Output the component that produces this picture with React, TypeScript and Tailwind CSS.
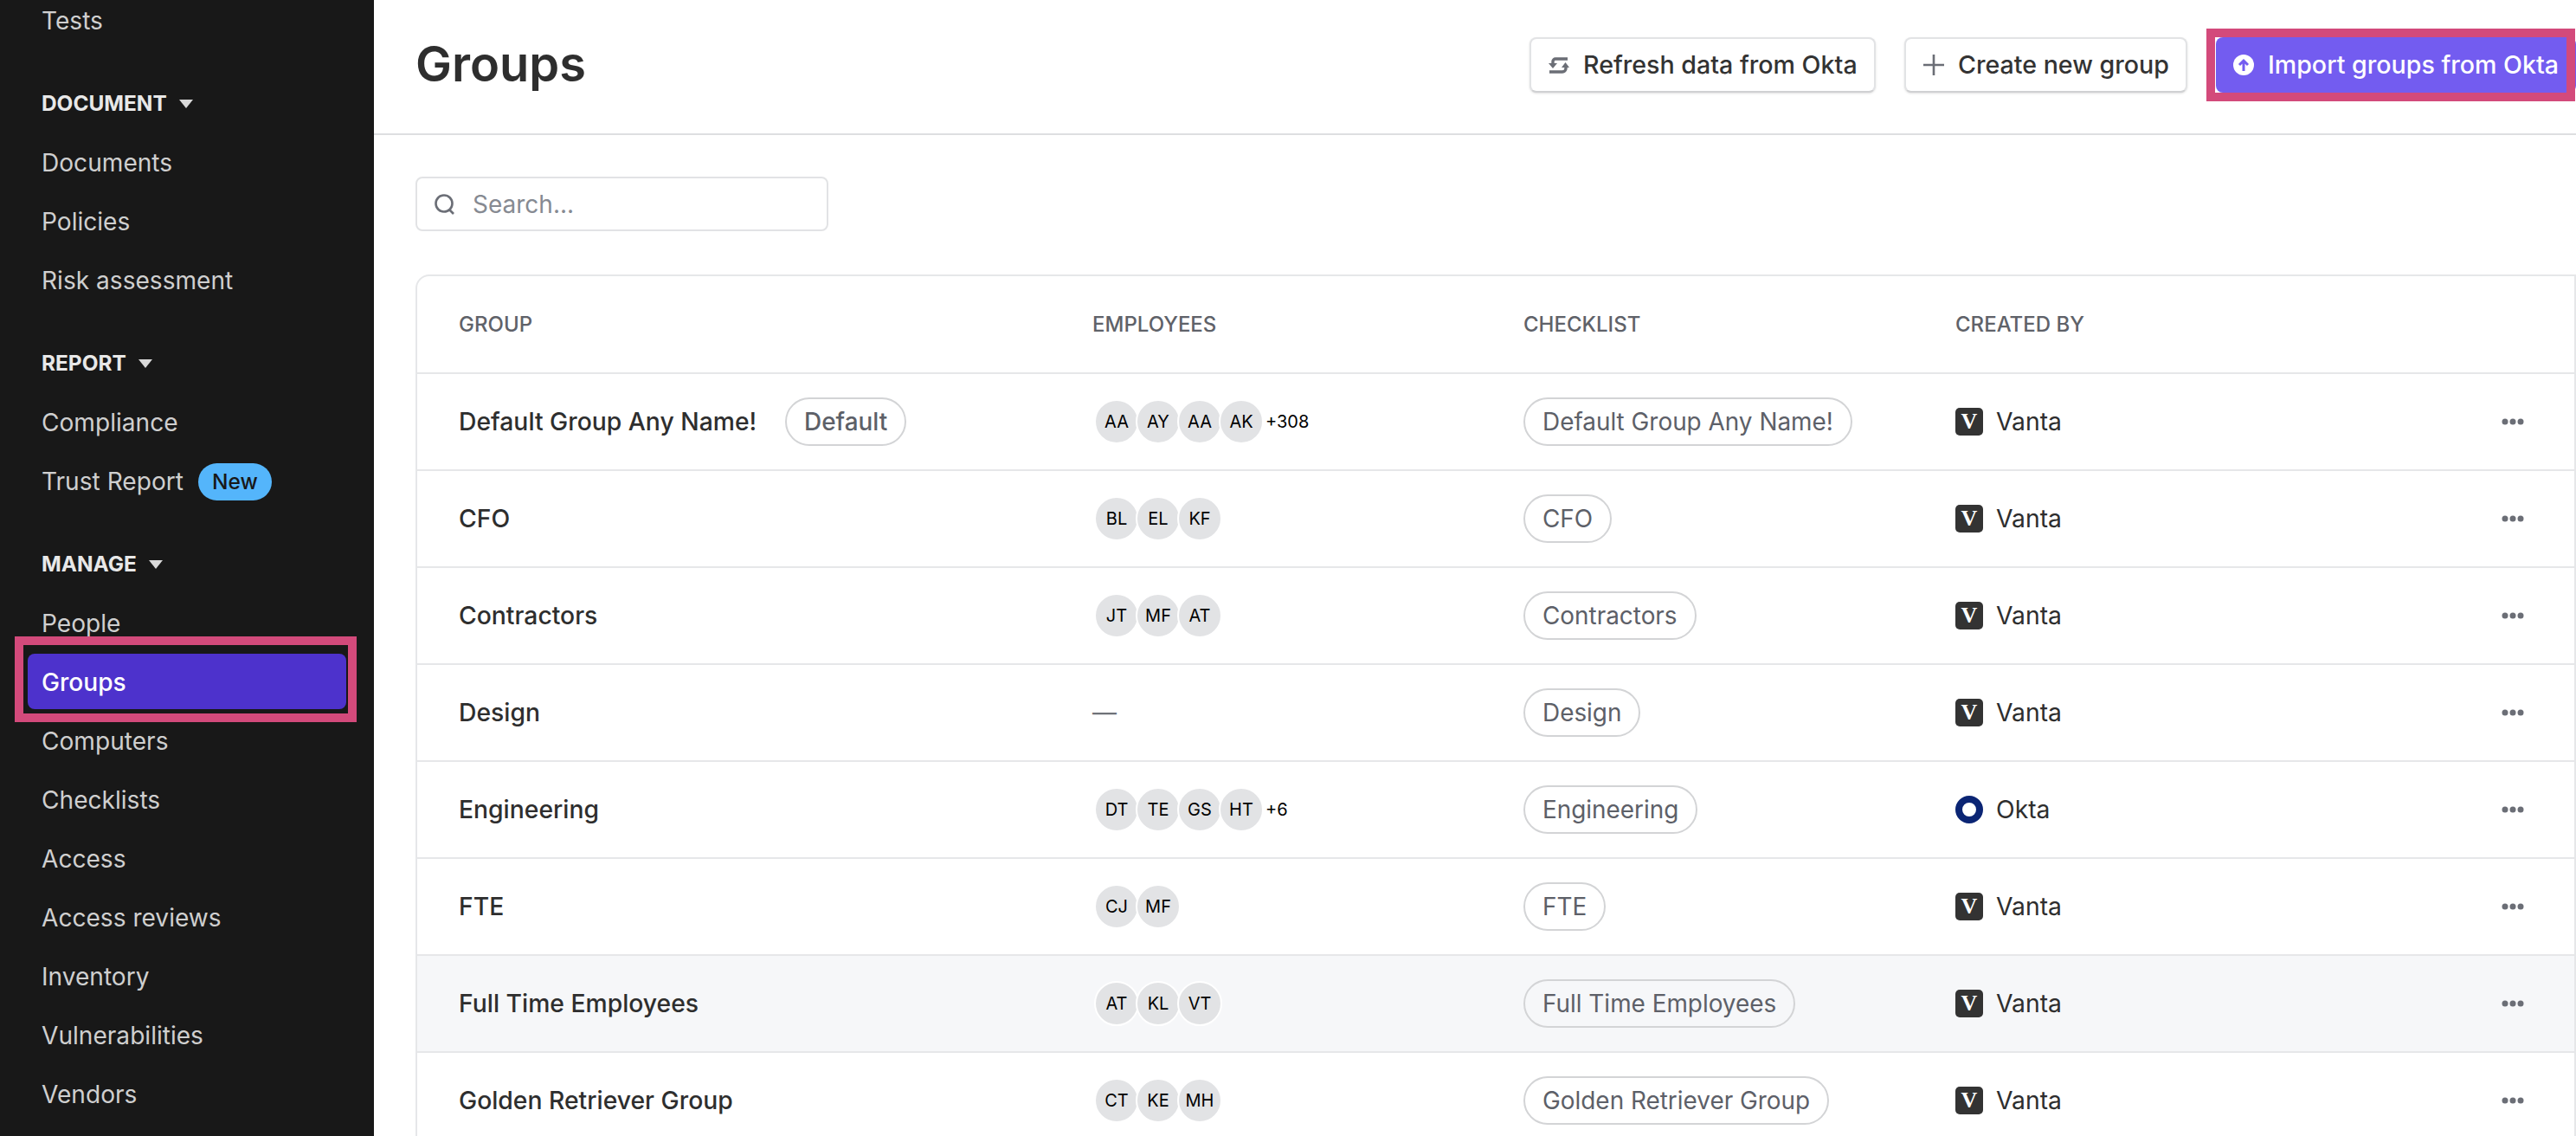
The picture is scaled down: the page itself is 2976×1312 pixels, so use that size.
const font = "font-['Inter',sans-serif]";

const navGroups = [
  { items: ['Tests'] },
  { label: 'DOCUMENT', items: ['Documents', 'Policies', 'Risk assessment'] },
  { label: 'REPORT', items: ['Compliance', 'Trust Report'] },
  {
    label: 'MANAGE',
    items: ['People', 'Groups', 'Computers', 'Checklists', 'Access', 'Access reviews', 'Inventory', 'Vulnerabilities', 'Vendors'],
  },
];

const rows = [
  { name: 'Default Group Any Name!', isDefault: true, people: ['AA', 'AY', 'AA', 'AK'], more: '+308', by: 'Vanta' },
  { name: 'CFO', people: ['BL', 'EL', 'KF'], by: 'Vanta' },
  { name: 'Contractors', people: ['JT', 'MF', 'AT'], by: 'Vanta' },
  { name: 'Design', people: [], by: 'Vanta' },
  { name: 'Engineering', people: ['DT', 'TE', 'GS', 'HT'], more: '+6', by: 'Okta' },
  { name: 'FTE', people: ['CJ', 'MF'], by: 'Vanta' },
  { name: 'Full Time Employees', people: ['AT', 'KL', 'VT'], by: 'Vanta', hover: true },
  { name: 'Golden Retriever Group', people: ['CT', 'KE', 'MH'], by: 'Vanta' },
];

function Caret() {
  return (
    <svg width="16" height="11" viewBox="0 0 16 11" className="ml-[14px]">
      <path d="M0 1h16L8 11z" fill="#d9d9d9" />
    </svg>
  );
}

function Sidebar() {
  return (
    <aside className="w-[432px] shrink-0 bg-[#181818]">
      <div className="-mt-[9px]">
        {navGroups.map((group, i) => (
          <div key={i}>
            {group.label && (
              <div className="flex h-[96px] items-center pl-12 pt-[25px] text-[24.4px] font-bold text-[#e8e8e8]">
                {group.label}
                <Caret />
              </div>
            )}
            {group.items.map((item) => (
              <div
                key={item}
                className={`relative mx-8 mb-1 flex h-16 items-center rounded-lg px-4 pt-[2px] text-[28.1px] ${
                  item === 'Groups' ? 'bg-[#4d32cc] font-medium text-white' : 'text-[#cfcfcf]'
                }`}
              >
                {item}
                {item === 'Trust Report' && (
                  <span className="ml-[17px] flex h-[43px] items-center rounded-full bg-[#54b5fb] px-4 text-[24.5px] font-medium text-[#181818]">
                    New
                  </span>
                )}
                {item === 'Groups' && (
                  <span className="absolute -top-5 -right-3 -bottom-[15px] -left-[15px] border-10 border-[#d34a7b]" />
                )}
              </div>
            ))}
          </div>
        ))}
      </div>
    </aside>
  );
}

function Avatars({ people, more }: { people: string[]; more?: string }) {
  if (people.length === 0) return <span className="text-[28px] text-[#6f7278]">—</span>;
  return (
    <div className="flex items-center pl-[2px]">
      {people.map((p, i) => (
        <span
          key={i}
          className="-mr-1 flex h-[52px] w-[52px] items-center justify-center rounded-full border-2 border-white bg-[#e2e3e5] text-[20px] text-black"
        >
          {p}
        </span>
      ))}
      {more && <span className="ml-[6px] text-[20px] text-black">{more}</span>}
    </div>
  );
}

function Chip({ children }: { children: string }) {
  return (
    <span className="inline-flex h-14 items-center rounded-full border-2 border-[#d3d4d6] px-[20px] pt-[1px] text-[27.9px] text-[#5d6068]">
      {children}
    </span>
  );
}

function Source({ by }: { by: string }) {
  return (
    <div className="flex items-center gap-[15px] text-[28.3px] text-[#2e2e2e]">
      {by === 'Okta' ? (
        <span className="h-8 w-8 rounded-full border-[8px] border-[#0b2574]" />
      ) : (
        <span className="flex h-8 w-8 items-center justify-center rounded-[5px] bg-[#333333] font-['Liberation_Serif',serif] text-[26px] leading-none font-bold text-white">
          V
        </span>
      )}
      {by}
    </div>
  );
}

function Dots() {
  return (
    <svg width="26" height="8" viewBox="0 0 26 8" fill="#6b6e76" className="-ml-1">
      <circle cx="4" cy="4" r="3.5" />
      <circle cx="13" cy="4" r="3.5" />
      <circle cx="22" cy="4" r="3.5" />
    </svg>
  );
}

const btn =
  'flex h-[64px] items-center gap-4 rounded-lg border-2 border-[#e2e3e5] border-b-[#d0d1d3] bg-white pl-5 text-[28.6px] font-medium text-[#333333] shadow-sm';

export default function App() {
  return (
    <div className={`flex h-[1312px] w-[2976px] overflow-hidden bg-white ${font}`}>
      <Sidebar />
      <main className="min-w-0 flex-1">
        <header className="flex h-[156px] items-center justify-between border-b-2 border-[#dedfe1] pl-12">
          <h1 className="-mt-[6px] text-[56px] font-semibold text-[#2e2e2e]">Groups</h1>
          <div className="mt-[-4px] flex items-center">
            <button className={`${btn} w-[400px]`}>
              <svg width="24" height="21" viewBox="0 0 24 21" fill="#6b6e76">
                <path d="M22 3H8a3 3 0 0 0-3 3v3" fill="none" stroke="#6b6e76" strokeWidth="3.4" />
                <path d="M0 8h10l-5 6z" />
                <path d="M1 18h15a4 4 0 0 0 4-4v-2" fill="none" stroke="#6b6e76" strokeWidth="3.4" />
                <path d="M15 13h9l-4.500-6z" />
              </svg>
              Refresh data from Okta
            </button>
            <button className={`${btn} ml-[33px] w-[327px]`}>
              <svg width="24" height="24" viewBox="0 0 24 24" fill="none" stroke="#6b6e76" strokeWidth="2.6">
                <path d="M12 0v24M0 12h24" />
              </svg>
              Create new group
            </button>
            <button className="relative ml-[33px] flex h-[64px] w-[416px] items-center gap-4 rounded-lg bg-[#735cf0] pl-5 text-[28.6px] font-medium text-white">
              <svg width="24" height="24" viewBox="0 0 24 24">
                <circle cx="12" cy="12" r="12" fill="white" />
                <path d="M12 19V7M7 12l5-5 5 5" fill="none" stroke="#735cf0" strokeWidth="3" />
              </svg>
              Import groups from Okta
              <span className="absolute -top-[10px] right-[1px] -bottom-[10px] -left-[11px] border-10 border-[#d34a7b]" />
            </button>
          </div>
        </header>
        <div className="pt-[48px] pl-12">
          <div className="flex h-[63px] w-[477px] items-center gap-[20px] rounded-lg border-2 border-[#e2e3e5] pl-5 text-[28px] text-[#868a92]">
            <svg width="24" height="24" viewBox="0 0 24 24" fill="none" stroke="#6b6e76" strokeWidth="2.6">
              <circle cx="11" cy="11" r="9.5" />
              <path d="M17 18l5 5" />
            </svg>
            Search...
          </div>
          <div className="mt-[50px] rounded-tl-2xl border-2 border-[#e6e7e9]">
            <div className="grid h-[111px] grid-cols-[732px_498px_499px_1fr] items-center pl-12 text-[24px] font-medium text-[#5f6269]">
              <span>GROUP</span>
              <span>EMPLOYEES</span>
              <span>CHECKLIST</span>
              <span>CREATED BY</span>
            </div>
            {rows.map((row) => (
              <div
                key={row.name}
                className={`grid h-[112px] grid-cols-[732px_498px_499px_1fr] items-center border-t-2 border-[#e6e7e9] pl-12 ${
                  row.hover ? 'bg-[#f6f7f9]' : ''
                }`}
              >
                <div className="flex items-center gap-[33px] text-[28.3px] font-medium text-[#2e2e2e]">
                  {row.name}
                  {row.isDefault && <Chip>Default</Chip>}
                </div>
                <Avatars people={row.people} more={row.more} />
                <div>
                  <Chip>{row.name}</Chip>
                </div>
                <div className="flex items-center justify-between pr-[58px]">
                  <Source by={row.by} />
                  <Dots />
                </div>
              </div>
            ))}
          </div>
        </div>
      </main>
    </div>
  );
}
